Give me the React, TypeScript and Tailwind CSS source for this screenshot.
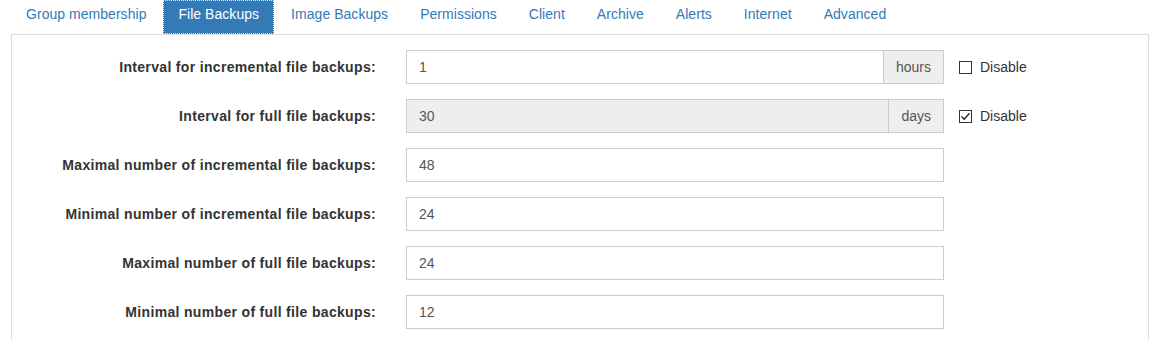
import React from 'react'

const tabs = ['Group membership', 'File Backups', 'Image Backups', 'Permissions', 'Client', 'Archive', 'Alerts', 'Internet', 'Advanced']

interface Row {
  label: string
  value: string
  unit?: string
  disabled?: boolean
  checked?: boolean
}

const rows: Row[] = [
  { label: 'Interval for incremental file backups:', value: '1', unit: 'hours', checked: false },
  { label: 'Interval for full file backups:', value: '30', unit: 'days', disabled: true, checked: true },
  { label: 'Maximal number of incremental file backups:', value: '48' },
  { label: 'Minimal number of incremental file backups:', value: '24' },
  { label: 'Maximal number of full file backups:', value: '24' },
  { label: 'Minimal number of full file backups:', value: '12' },
]

function Checkbox({ checked }: { checked: boolean }) {
  return (
    <span className="w-[13px] h-[13px] border border-[#333] bg-white flex items-center justify-center">
      {checked && (
        <svg width="11" height="11" viewBox="0 0 11 11" fill="none" stroke="#222" strokeWidth="1.3">
          <polyline points="1.5 5.5 4.2 8.3 9.5 2.2" />
        </svg>
      )}
    </span>
  )
}

export default function App() {
  return (
    <div className="w-[1159px] h-[340px] overflow-hidden bg-white text-[14px] leading-5" style={{ fontFamily: '"Liberation Sans", Arial, sans-serif' }}>
      {/* tabs */}
      <ul className="flex pl-[11px]">
        {tabs.map(t => (
          <li key={t} className="mr-[2px]">
            <span
              className={
                t === 'File Backups'
                  ? 'block px-[15px] pt-[4px] pb-[10px] h-[34px] tracking-[0.04px] bg-[#337ab7] text-white outline outline-1 outline-dotted outline-offset-[-1px] outline-[#dbe8f5]'
                  : 'block px-[15px] pt-[4px] pb-[10px] h-[34px] tracking-[0.04px] text-[#337ab7]'
              }>
              {t}
            </span>
          </li>
        ))}
      </ul>

      {/* panel */}
      <div className="ml-[11px] mr-[10px] border border-[#ddd] pt-[15px] pb-6 flex flex-col gap-[15px]">
        {rows.map(r => (
          <div key={r.label} className="flex items-center">
            <label className="w-[364px] text-right font-bold text-[#333] tracking-[0.33px]">{r.label}</label>
            <div className="ml-[30px] w-[538px] h-[34px] flex">
              <div className={`flex-1 border border-[#ccc] px-3 flex items-center text-[#555] ${r.disabled ? 'bg-[#eee]' : 'bg-white'}`}>
                {r.value}
              </div>
              {r.unit && (
                <div className="border border-l-0 border-[#ccc] bg-[#eee] px-3 flex items-center text-[#555]">{r.unit}</div>
              )}
            </div>
            {r.unit && (
              <div className="ml-[15px] flex items-center gap-2 text-[#333]">
                <Checkbox checked={!!r.checked} />
                <span>Disable</span>
              </div>
            )}
          </div>
        ))}
      </div>
    </div>
  )
}
